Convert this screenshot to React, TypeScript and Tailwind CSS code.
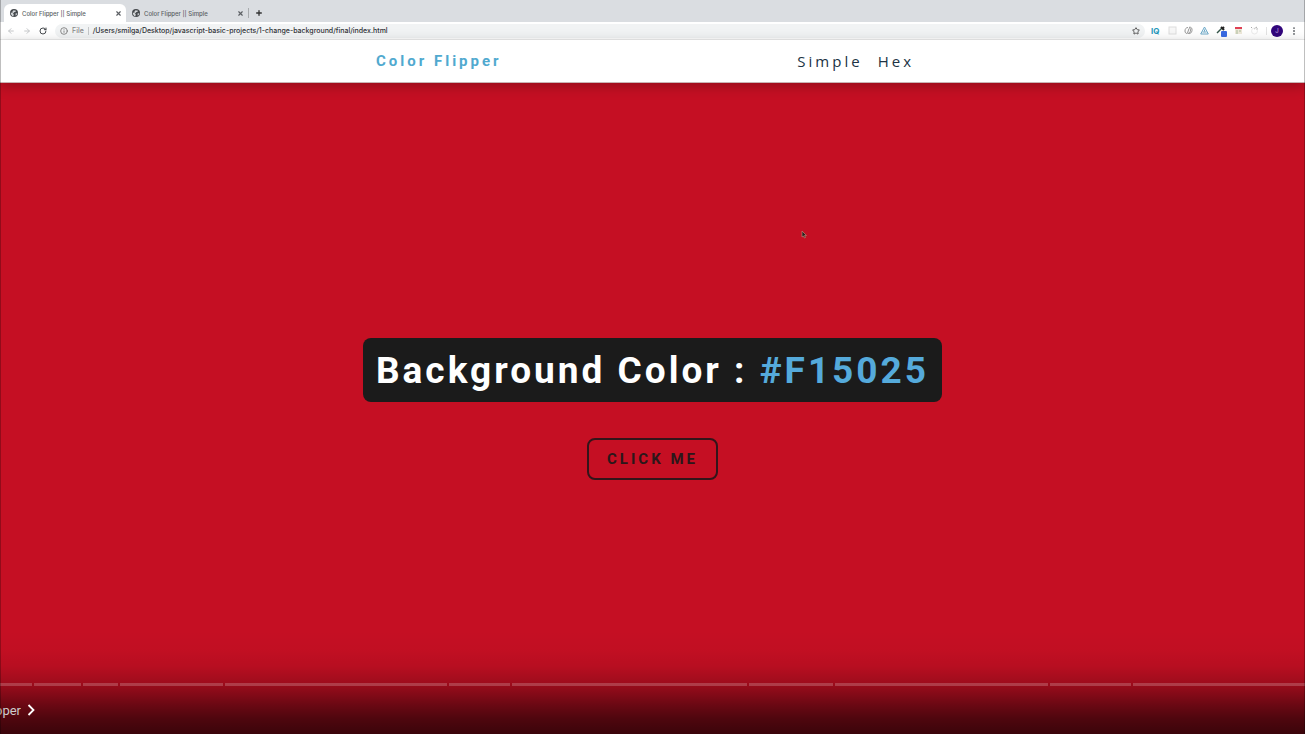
import React from "react";
import { ArrowLeft, ArrowRight, RotateCw, Info, Star, X, Plus, MoreVertical } from "lucide-react";

const chapters = [32, 47, 35, 103, 222, 61, 235, 84, 213, 81, 172];

function GlobeIcon() {
  return (
    <svg viewBox="0 0 16 16" className="size-2 shrink-0" aria-hidden="true">
      <circle cx="8" cy="8" r="8" fill="#45494d" />
      <path d="M1.500 7l4 1 2 3-1 4C4 14 1.500 11 1.500 7zM7 2.500l5 1-1 2-3 1-1 2-3-2zM11 9l3.500-.5c0 2-1.500 4-3 5z" fill="#d4d7da" />
    </svg>
  );
}

function Tab({ active = false }: { active?: boolean }) {
  return (
    <div
      className={
        active
          ? "flex h-[18px] w-[122px] items-center gap-1 rounded-t-md bg-white pr-1 pl-1.5"
          : "flex h-[18px] w-[122px] items-center gap-1 pr-1 pl-1.5"
      }
    >
      <GlobeIcon />
      <span className="flex-1 whitespace-nowrap">Color Flipper || Simple</span>
      <button aria-label="Close tab" className="flex">
        <X className="size-[7px]" strokeWidth={4} />
      </button>
    </div>
  );
}

function Extensions() {
  return (
    <div className="flex items-center gap-[7px]">
      <span className="w-2 text-[8px] font-bold text-[#2597bb]">IQ</span>
      <svg viewBox="0 0 9 9" className="ml-0.5 size-[9px]" fill="#f7f7f7" stroke="#dedede">
        <rect x="1" y="1" width="7" height="7" />
      </svg>
      <svg viewBox="0 0 9 9" className="size-[9px]" fill="none" stroke="#969696">
        <path d="M4 1.500C2 1.500 1 3 1 5c0 1.500.8 2.500 2 2.500M3.500 7.500c2 0 3-1.500 3-3.500 0-1-.5-2-1.500-2.500" />
        <path d="M5 1.300C7 .8 8.300 2 8 4.500 7.700 6.500 6.500 7.800 4.500 7.500M5 2.500L3.500 7" />
      </svg>
      <svg viewBox="0 0 9 9" className="size-[9px]" fill="none" stroke="#6ba8c8" strokeWidth="1">
        <path d="M4.500 1L8.300 8H.7zM4.500 3.500v2M2.500 6h4" />
      </svg>
      <svg viewBox="0 0 11 12" className="h-3 w-[11px]" fill="none">
        <path d="M1 8l5-5" stroke="#345449" strokeWidth="1.500" />
        <path d="M5 2l3 3M6.500 3.500L8 2" stroke="#222" strokeWidth="2" />
        <rect x="5" y="6" width="6" height="6" rx="1" fill="#386ae3" />
      </svg>
      <svg viewBox="0 0 9 9" className="size-[9px]">
        <rect x="1" y="1" width="7" height="7" fill="#eee9da" />
        <path d="M1 1h7v2H1z" fill="#df4054" />
        <path d="M2 5h2M5 5h2M2 7h2" stroke="#a9bd9d" />
      </svg>
      <svg viewBox="0 0 9 9" className="size-[9px]" fill="none" stroke="#a8a8a8">
        <path d="M1 1l1 1M4 3l3-2M6 3h2" />
        <circle cx="4.500" cy="5" r="3" stroke="#ececec" />
      </svg>
      <span className="h-2 w-px bg-[#e3e3e3]" />
      <span className="-mr-px -ml-[3px] flex size-3 items-center justify-center rounded-full bg-[#31057b] text-[6px] text-[#b69bd9]">J</span>
      <button aria-label="Browser menu" className="flex">
        <MoreVertical className="size-2.5 text-[#5f6368]" strokeWidth={2.5} />
      </button>
    </div>
  );
}

function BrowserBar() {
  return (
    <header className="font-['Inter','Liberation_Sans',sans-serif] text-[7px] font-medium text-[#5b5f63]">
      <div className="flex h-[22px] items-end bg-[#dadde1] pl-1 text-[6px]">
        <Tab active />
        <Tab />
        <div className="flex h-[18px] items-center gap-1.5">
          <span className="h-2.5 w-px bg-[#a8abae]" />
          <button aria-label="New tab" className="flex text-[#333]">
            <Plus className="size-2" strokeWidth={4} />
          </button>
        </div>
      </div>
      <div className="flex h-[18px] items-center border-b border-[#eeeeee] bg-white pr-1.5 pl-[7px]">
        <div className="flex w-12 items-center gap-2">
          <button aria-label="Back" className="flex"><ArrowLeft className="size-2 text-[#c6c8ca]" strokeWidth={3} /></button>
          <button aria-label="Forward" className="flex"><ArrowRight className="size-2 text-[#c6c8ca]" strokeWidth={3} /></button>
          <button aria-label="Reload" className="flex"><RotateCw className="size-2 text-[#45494d]" strokeWidth={3} /></button>
        </div>
        <div className="mr-1.5 flex h-3.5 flex-1 items-center gap-1 rounded-full bg-[#f1f3f4] px-[5px]">
          <Info className="size-2 text-[#777]" strokeWidth={2.5} />
          <span className="leading-4 text-[#888]">File</span>
          <span className="h-2 w-px bg-[#c5c7c9]" />
          <span className="flex-1 leading-4 text-[#303236]">/Users/smilga/Desktop/javascript-basic-projects/1-change-background/final/index.html</span>
          <button aria-label="Bookmark" className="flex"><Star className="size-2 text-[#555]" strokeWidth={3} /></button>
        </div>
        <Extensions />
      </div>
    </header>
  );
}

function PlayerControls() {
  return (
    <div className="pointer-events-none absolute inset-x-0 bottom-0 bg-[linear-gradient(to_bottom,transparent_0%,rgba(0,0,0,0.02)_20%,rgba(0,0,0,0.07)_35%,rgba(0,0,0,0.19)_50%,rgba(0,0,0,0.46)_72%,rgba(0,0,0,0.6)_85%,rgba(0,0,0,0.7)_100%)] pt-[53px]">
      <div className="flex h-[3px] gap-0.5">
        {chapters.map((length, index) => (
          <span key={index} className="basis-0 bg-white/20" style={{ flexGrow: length }} />
        ))}
      </div>
      <button className="pointer-events-auto flex h-12 items-center gap-1.5 font-['Roboto',sans-serif] text-[13px] text-[#ccc]">
        <span className="flex w-[21px] justify-end overflow-hidden pt-0.5 whitespace-nowrap">Color Flipper</span>
        <svg viewBox="0 0 8 12" className="h-3 w-2" fill="none" stroke="white" strokeWidth="1.800" aria-hidden="true">
          <path d="M1.500 1l5 5-5 5" />
        </svg>
      </button>
    </div>
  );
}

export default function App() {
  return (
    <div className="relative flex min-h-screen flex-col overflow-hidden bg-[#c50f23] font-['Roboto',sans-serif]">
      <BrowserBar />
      <nav className="z-10 flex h-[43px] shrink-0 items-center border-b border-[#c9b4b4] bg-white shadow-[0_3px_12px_rgba(0,0,0,0.25)]">
        <div className="mx-auto flex w-full max-w-[553px] items-center justify-between">
          <h4 className="text-[15px] font-bold tracking-[3px] text-[#50a9cf]">Color Flipper</h4>
          <ul className="flex gap-[15px] pr-[15px] font-['Open_Sans',sans-serif] text-[15px] tracking-[3px] text-[#203344]">
            <li><a href="#simple">Simple</a></li>
            <li><a href="#hex">Hex</a></li>
          </ul>
        </div>
      </nav>
      <main className="flex flex-1 flex-col items-center justify-center gap-9">
        <h2 className="rounded-lg bg-[#1b1b1b] px-[13px] pt-0.5 text-[37px] leading-[62px] font-bold tracking-[3px] whitespace-nowrap text-white">
          Background Color : <span className="text-[#55aadb]">#F15025</span>
        </h2>
        <button className="h-[42px] rounded-lg border-2 border-[#33151a] px-[18px] pt-0.5 text-[15px] font-bold tracking-[3px] text-[#2b171a]">
          CLICK ME
        </button>
      </main>
      <PlayerControls />
      <div className="pointer-events-none absolute inset-0 z-20 border-x border-black/25" />
      <svg viewBox="0 0 6 9" className="absolute top-[230px] left-[61.400%] h-[9px] w-1.5" aria-hidden="true">
        <path d="M1 1v6l1.500-1 1 2 1-.5-1-2h2z" fill="#25201e" stroke="#b98574" strokeWidth=".7" />
      </svg>
    </div>
  );
}
